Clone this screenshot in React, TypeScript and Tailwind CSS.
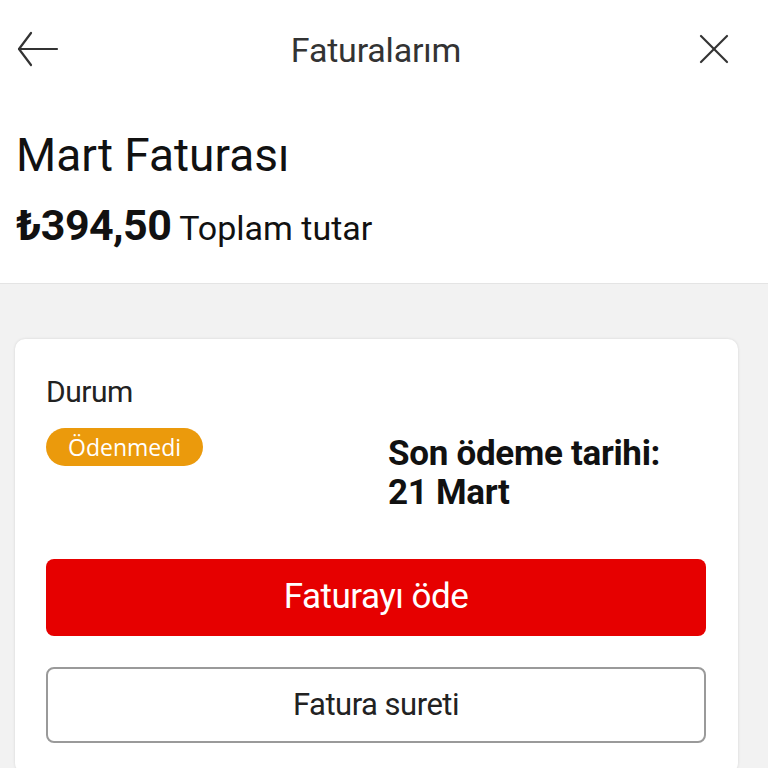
const ArrowLeft = () => (
  <svg width="42" height="36" viewBox="0 0 42 36" fill="none" stroke="#333" strokeWidth="2.2" strokeLinecap="round" strokeLinejoin="round">
    <path d="M40 18H2" />
    <path d="M14 2L2 18l12 16" />
  </svg>
);

const CloseIcon = () => (
  <svg width="30" height="30" viewBox="0 0 30 30" fill="none" stroke="#333" strokeWidth="2.2" strokeLinecap="round">
    <path d="M2 2l26 26" />
    <path d="M28 2L2 28" />
  </svg>
);

export default function App() {
  return (
    <div className="w-[768px] h-[768px] overflow-hidden bg-[#f2f2f2] font-['Roboto',sans-serif] text-[#111]">
      <div className="bg-white">
        <header className="relative h-[100px] flex items-center justify-center">
          <div className="absolute left-[17px] top-[31px]">
            <ArrowLeft />
          </div>
          <h1 className="mr-[16px] text-[34px] text-[#333] leading-none tracking-[-0.2px]">Faturalarım</h1>
          <div className="absolute right-[39px] top-[34px]">
            <CloseIcon />
          </div>
        </header>
        <div className="px-[16px] pt-[25px] pb-[32px] border-b border-[#e4e4e4]">
          <h2 className="text-[46px] leading-[60px] text-[#111]">Mart Faturası</h2>
          <div className="flex items-baseline gap-[8px] mt-[17px] leading-[46px]">
            <span className="text-[43px] font-bold tracking-[-0.6px]">₺394,50</span>
            <span className="text-[34px]">Toplam tutar</span>
          </div>
        </div>
      </div>

      <div className="ml-[15px] mr-[30px] pt-[55px]">
        <div className="bg-white rounded-[10px] shadow-[0_0_3px_rgba(0,0,0,0.12)] pl-[31px] pr-[32px] pt-[35px] pb-[30px]">
          <div className="grid grid-cols-[342px_1fr]">
            <div>
              <div className="text-[30px] leading-[36px] text-[#222] tracking-[-0.5px]">Durum</div>
              <span className="inline-flex items-center mt-[18px] h-[38px] px-[22px] rounded-full bg-[#eb9a0c] text-white text-[23px] font-['Open_Sans',sans-serif]">
                Ödenmedi
              </span>
            </div>
            <div className="pt-[60px] text-[35px] font-bold leading-[39px] tracking-[-0.3px]">
              <div>Son ödeme tarihi:</div>
              <div>21 Mart</div>
            </div>
          </div>

          <button className="mt-[47px] w-full h-[77px] rounded-[8px] bg-[#e60000] text-white text-[35px] tracking-[-0.5px]">
            Faturayı öde
          </button>
          <button className="mt-[31px] w-full h-[76px] rounded-[8px] border-2 border-[#9a9a9a] bg-white text-[#222] text-[31px] tracking-[-0.5px]">
            Fatura sureti
          </button>
        </div>
      </div>
    </div>
  );
}
